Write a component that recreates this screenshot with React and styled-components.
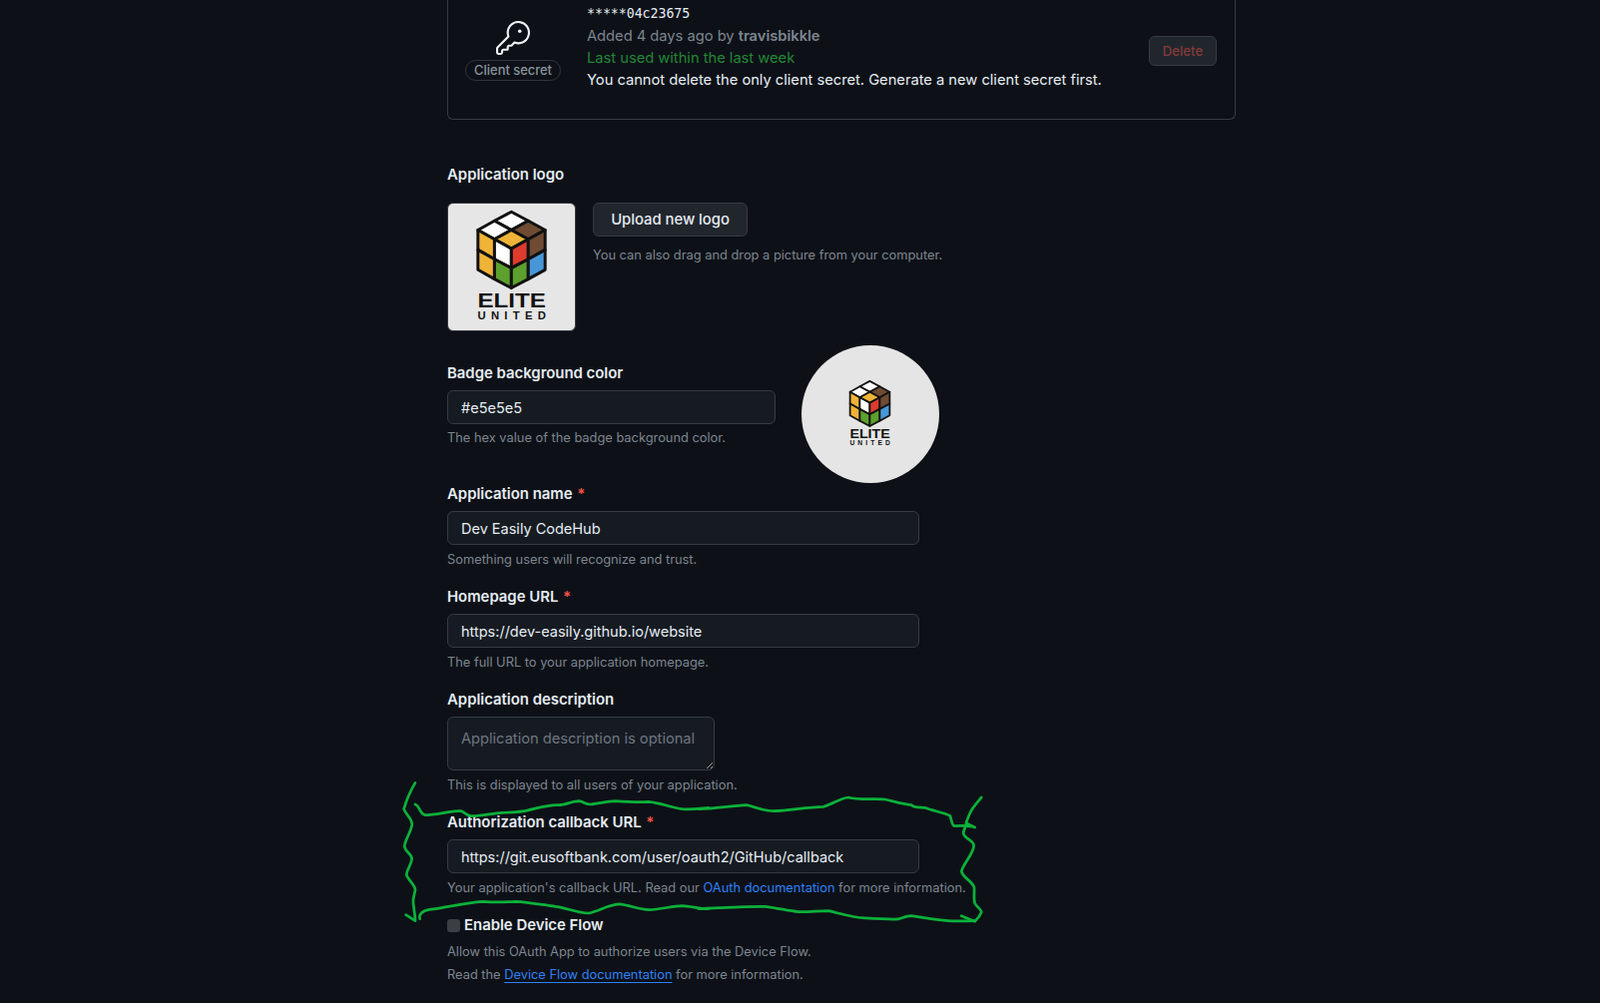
import React from "react";
import styled, { createGlobalStyle } from "styled-components";
import { GoKey } from "react-icons/go";

const Global = createGlobalStyle`
  html, body { margin: 0; padding: 0; background: #0d1117; }
  body { font-family: Inter, "Noto Sans", "Liberation Sans", sans-serif; color: #e6edf3; }
  #root { height: 1005px; overflow: hidden; position: relative; }
`;

const Page = styled.main`
  width: 790px;
  margin-left: 448px;
  display: flex;
  flex-direction: column;
`;

const SecretCard = styled.section`
  display: flex;
  align-items: flex-start;
  height: 120px;
  box-sizing: border-box;
  padding: 3px 18px 0 17px;
  border: 1px solid #363b42;
  border-top: 0;
  border-radius: 0 0 6px 6px;
  margin-bottom: 45px;
`;

const KeyColumn = styled.div`
  width: 96px;
  margin: 18px 26px 0 0;
  flex: none;
  display: flex;
  flex-direction: column;
  align-items: center;
  gap: 5px;
  color: #f0f3f6;
`;

const TypeBadge = styled.span`
  width: 96px;
  height: 21px;
  box-sizing: border-box;
  border: 1px solid #30363d;
  border-radius: 11px;
  color: #8b949e;
  font-size: 12.9px;
  font-weight: 500;
  line-height: 19px;
  text-align: center;
  white-space: nowrap;
`;

const SecretInfo = styled.div`
  flex: 1;
  display: flex;
  flex-direction: column;
`;

const SecretLine = styled.div`
  height: ${(p) => (p.$mono ? "21.5px" : "22.3px")};
  line-height: ${(p) => (p.$mono ? "21.5px" : "22.3px")};
  font-size: ${(p) => (p.$mono ? "13.2px" : "14.68px")};
  font-family: ${(p) => (p.$mono ? '"DejaVu Sans Mono", monospace' : "inherit")};
  color: ${(p) => p.$color || "#e6edf3"};
  white-space: nowrap;
  strong { font-weight: 600; }
`;

const DeleteButton = styled.button`
  flex: none;
  width: 68px;
  height: 30px;
  margin-top: 33px;
  background: #21262d;
  border: 1px solid #363b42;
  border-radius: 6px;
  color: #853a3a;
  font: 500 13.2px Inter, sans-serif;
  padding: 0 0 1px;
`;

const Label = styled.label`
  display: block;
  height: 20px;
  line-height: 20px;
  font-size: 14.9px;
  font-weight: 600;
  color: #e6edf3;
  white-space: nowrap;
`;

const Star = styled.span`
  color: #f85149;
  margin-left: 1px;
`;

const LogoRow = styled.div`
  display: flex;
  gap: 17px;
  margin: 18px 0 13px;
`;

const LogoTile = styled.div`
  width: 129px;
  height: 129px;
  box-sizing: border-box;
  flex: none;
  background: #e6e6e6;
  border: 1px solid #30363d;
  border-radius: 6px;
  overflow: hidden;
  display: flex;
`;

const UploadColumn = styled.div`
  display: flex;
  flex-direction: column;
  gap: 9px;
  align-items: flex-start;
`;

const UploadButton = styled.button`
  width: 155px;
  height: 34px;
  background: #21262d;
  border: 1px solid #363b42;
  border-radius: 6px;
  color: #e6edf3;
  font: 500 14.8px Inter, sans-serif;
  padding: 0;
`;

const BadgeRow = styled.div`
  display: flex;
  align-items: flex-start;
  gap: 26px;
  height: 140px;
`;

const BadgeCircle = styled.div`
  width: 138px;
  height: 138px;
  margin-top: 1px;
  flex: none;
  border-radius: 50%;
  background: #e5e5e5;
  display: flex;
  align-items: center;
  justify-content: center;
  padding: 0 1px 1px 0;
  box-sizing: border-box;
`;

const Field = styled.div`
  margin-top: ${(p) => p.$top ?? 17}px;
  width: ${(p) => p.$width || "auto"};
`;

const TextInput = styled.input`
  display: block;
  box-sizing: border-box;
  width: ${(p) => p.$width || "473px"};
  height: 34px;
  margin-top: 7px;
  padding: 1px 13px 0;
  background: #161b22;
  border: 1px solid #363b42;
  border-radius: 6px;
  color: #e6edf3;
  font: 14.5px Inter, sans-serif;
  outline: none;
`;

const DescInput = styled.textarea`
  display: block;
  box-sizing: border-box;
  width: 268px;
  height: 54px;
  margin-top: 7px;
  padding: 10px 13px 0;
  background: #161b22;
  border: 1px solid #363b42;
  border-radius: 6px;
  color: #e6edf3;
  font: 14.65px/22px Inter, sans-serif;
  outline: none;
  resize: both;
  &::placeholder { color: #6e7681; opacity: 1; }
`;

const Hint = styled.p`
  margin: ${(p) => p.$top ?? 5}px 0 0;
  height: ${(p) => p.$height ?? 20}px;
  line-height: ${(p) => p.$height ?? 20}px;
  font-size: 12.83px;
  color: #7d8590;
  white-space: nowrap;
`;

const DocLink = styled.a`
  color: #2f81f7;
  text-decoration: ${(p) => (p.$underline ? "underline" : "none")};
  text-underline-offset: 3px;
`;

const CheckRow = styled.div`
  display: flex;
  align-items: center;
  gap: 4px;
  height: 20px;
  margin-top: 17px;
`;

const Checkbox = styled.input.attrs({ type: "checkbox" })`
  appearance: none;
  width: 13px;
  height: 13px;
  margin: 1px 0 0;
  background: #3b3e43;
  border-radius: 3px;
`;

const Annotation = styled.svg`
  position: absolute;
  inset: 0;
  pointer-events: none;
  fill: none;
  stroke: #0cb13a;
  stroke-width: 8.2;
  stroke-linecap: round;
  stroke-linejoin: round;
`;

const Cube = ({ size }) => {
  const faces = [
    ["#fff", "216,65 267,92 216,120 165,92"],
    ["#fff", "165,92 216,120 165,148 115,120"],
    ["#6f4b33", "267,92 318,120 267,148 216,120"],
    ["#eeb337", "216,120 267,148 216,176 165,148"],
    ["#eeb337", "115,120 165,148 165,208 115,180"],
    ["#fff", "165,148 216,176 216,235 165,208"],
    ["#eeb337", "115,180 165,208 165,268 115,240"],
    ["#5da02e", "165,208 216,235 216,295 165,268"],
    ["#dc3b2e", "216,176 267,148 267,208 216,235"],
    ["#6f4b33", "267,148 318,120 318,180 267,208"],
    ["#5da02e", "216,235 267,208 267,268 216,295"],
    ["#4797d8", "267,208 318,180 318,240 267,268"],
  ];
  return (
    <svg width={size} height={size} viewBox="25 40 383 383" aria-label="Elite United logo">
      {faces.map(([fill, points]) => (
        <polygon key={points} points={points} fill={fill} stroke="#111" strokeWidth="9" strokeLinejoin="round" />
      ))}
      <text x="114" y="355" fontFamily="Liberation Sans, sans-serif" fontWeight="700" fontSize="62" textLength="206" lengthAdjust="spacingAndGlyphs" fill="#111">ELITE</text>
      <text x="114" y="391" fontFamily="Liberation Sans, sans-serif" fontWeight="700" fontSize="34" textLength="206" lengthAdjust="spacing" fill="#111">UNITED</text>
    </svg>
  );
};

export default function App() {
  return (
    <>
      <Global />
      <Page>
        <SecretCard>
          <KeyColumn>
            <GoKey size={34} />
            <TypeBadge>Client secret</TypeBadge>
          </KeyColumn>
          <SecretInfo>
            <SecretLine $mono>*****04c23675</SecretLine>
            <SecretLine $color="#7d8590">Added 4 days ago by <strong>travisbikkle</strong></SecretLine>
            <SecretLine $color="#238636">Last used within the last week</SecretLine>
            <SecretLine>You cannot delete the only client secret. Generate a new client secret first.</SecretLine>
          </SecretInfo>
          <DeleteButton disabled>Delete</DeleteButton>
        </SecretCard>

        <Label>Application logo</Label>
        <LogoRow>
          <LogoTile><Cube size={127} /></LogoTile>
          <UploadColumn>
            <UploadButton>Upload new logo</UploadButton>
            <Hint $top={0}>You can also drag and drop a picture from your computer.</Hint>
          </UploadColumn>
        </LogoRow>

        <BadgeRow>
          <Field $top={19} $width="329px">
            <Label>Badge background color</Label>
            <TextInput $width="329px" defaultValue="#e5e5e5" />
            <Hint $top={4}>The hex value of the badge background color.</Hint>
          </Field>
          <BadgeCircle><Cube size={75} /></BadgeCircle>
        </BadgeRow>

        <Field $top={0}>
          <Label>Application name<Star> *</Star></Label>
          <TextInput defaultValue="Dev Easily CodeHub" />
          <Hint>Something users will recognize and trust.</Hint>
        </Field>

        <Field>
          <Label>Homepage URL<Star> *</Star></Label>
          <TextInput defaultValue="https://dev-easily.github.io/website" />
          <Hint>The full URL to your application homepage.</Hint>
        </Field>

        <Field>
          <Label>Application description</Label>
          <DescInput placeholder="Application description is optional" />
          <Hint>This is displayed to all users of your application.</Hint>
        </Field>

        <Field>
          <Label>Authorization callback URL<Star> *</Star></Label>
          <TextInput defaultValue="https://git.eusoftbank.com/user/oauth2/GitHub/callback" />
          <Hint>
            Your application's callback URL. Read our <DocLink>OAuth documentation</DocLink> for more information.
          </Hint>
        </Field>

        <CheckRow>
          <Checkbox disabled />
          <Label as="span">Enable Device Flow</Label>
        </CheckRow>
        <Hint $top={5} $height={23}>Allow this OAuth App to authorize users via the Device Flow.</Hint>
        <Hint $top={0} $height={24}>
          Read the <DocLink $underline>Device Flow documentation</DocLink> for more information.
        </Hint>
      </Page>

      <Annotation width="1603" height="1005" viewBox="0 0 1603 1005">
        <g transform="translate(390 770) scale(0.3333)">
          <path d="M78 43 C62 70 50 100 44 122 C50 140 70 150 68 170 C64 195 46 215 46 235 C48 250 68 258 68 272 C66 290 52 305 52 320 C56 335 78 350 78 365 C76 380 70 390 72 405 C74 425 78 440 78 458 L50 440" />
          <path d="M78 108 C92 112 90 136 108 140 C140 140 190 126 215 128 C228 132 232 142 245 143 C280 144 310 134 340 133 C375 132 395 132 420 125 C450 118 480 108 510 110 C530 110 550 98 570 98 C585 100 590 108 605 108 C630 106 655 98 680 98 C710 100 750 102 780 100 C810 102 850 118 880 122 C910 124 935 120 960 118" />
          <path d="M92 452 C88 440 98 428 120 424 C170 420 220 404 280 400 C310 402 345 402 380 400 C420 402 460 410 500 415 C530 418 570 436 600 435 C630 428 660 410 690 408 C720 410 750 424 780 425 C815 424 850 414 880 413 C905 414 935 422 960 422" />
        </g>
        <g transform="translate(700 770) scale(0.3333)">
          <path d="M0 122 C50 120 100 112 145 110 C170 116 195 128 225 128 C275 126 325 116 375 115 C400 108 430 88 450 87 C480 96 530 90 560 93 C590 100 615 108 640 110 C650 120 670 116 680 118 C705 128 735 132 755 142 C760 150 760 170 768 173 C785 172 810 170 830 177 L805 165" />
          <path d="M850 87 C835 105 822 118 815 135 C808 150 802 170 800 180 C792 195 795 200 805 208 C815 216 827 222 827 232 C825 260 792 290 790 310 C795 330 825 340 828 358 C830 375 825 390 830 405 C835 415 850 425 850 432 C845 445 838 452 830 460 L790 443" />
          <path d="M0 422 C60 420 140 414 200 415 C240 420 270 428 300 431 C330 432 360 428 390 428 C425 436 465 448 500 450 C535 452 570 454 600 453 C615 448 625 443 640 443 C680 450 720 456 750 458 C780 460 805 458 830 458" />
        </g>
      </Annotation>
    </>
  );
}
